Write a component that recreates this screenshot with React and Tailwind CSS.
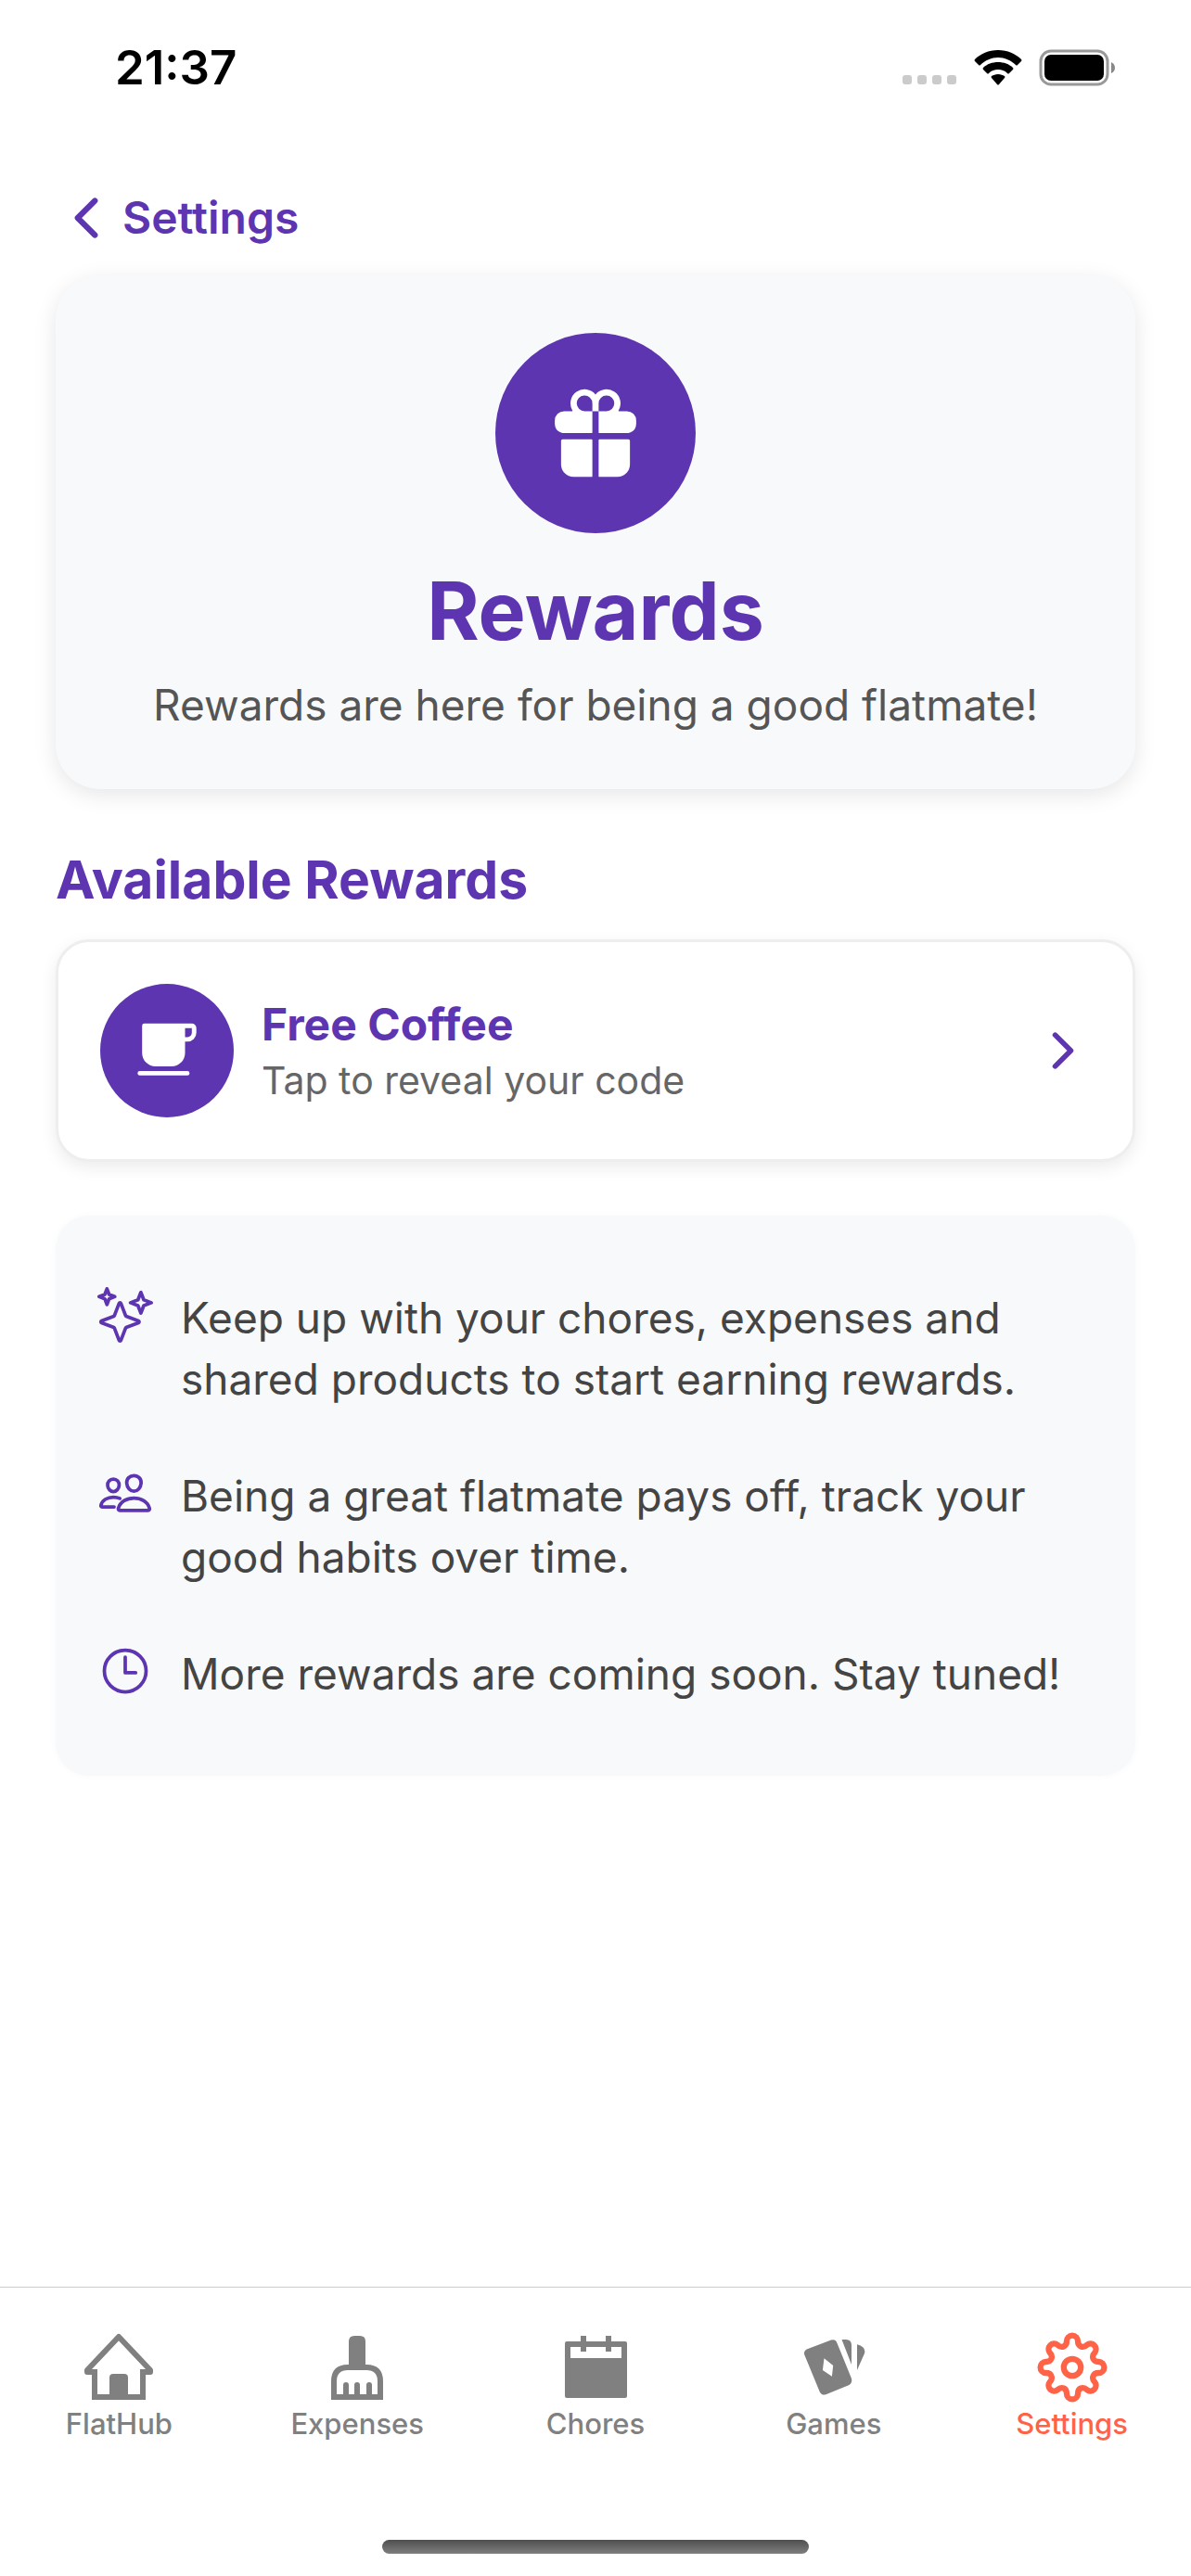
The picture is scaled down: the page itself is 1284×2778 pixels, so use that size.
import React from 'react';
import {
  IoCafe,
  IoChevronBack,
  IoChevronForward,
  IoGift,
  IoPeopleOutline,
  IoSparklesOutline,
  IoTimeOutline,
} from 'react-icons/io5';

const tips = [
  { icon: IoSparklesOutline, text: 'Keep up with your chores, expenses and shared products to start earning rewards.' },
  { icon: IoPeopleOutline, text: 'Being a great flatmate pays off, track your good habits over time.' },
  { icon: IoTimeOutline, text: 'More rewards are coming soon. Stay tuned!' },
];

const HouseIcon = () => (
  <svg width="80" height="80" viewBox="0 0 80 80" fill="none" stroke="currentColor" strokeWidth="6">
    <path d="M14 45 H6 V43 L40 7 L74 43 V45 H66" strokeLinejoin="round" />
    <path d="M14 42 V72 H66 V42" />
    <path d="M30 74 V51 Q30 47 34 47 H46 Q50 47 50 51 V74 Z" fill="currentColor" stroke="none" />
  </svg>
);

const BrushIcon = () => (
  <svg width="80" height="80" viewBox="0 0 80 80" fill="none" stroke="currentColor" strokeWidth="6">
    <path d="M15 72 V55 Q15 40 30 40 H50 Q65 40 65 55 V72 Z" />
    <path d="M31 40 V12 Q31 6 37 6 H43 Q49 6 49 12 V40 Z" fill="currentColor" stroke="none" />
    <path d="M28 72 V59 M40 72 V59 M53 72 V59" strokeLinecap="round" />
  </svg>
);

const CalendarIcon = () => (
  <svg width="80" height="80" viewBox="0 0 80 80" fill="currentColor">
    <path fillRule="evenodd" d="M9 12 H72 Q74 12 74 14 V71 Q74 73 72 73 H9 Q7 73 7 71 V14 Q7 12 9 12 Z M13 18 V30 H68 V18 Z" />
    <path d="M24 6 H30 V23 H24 Z M51 6 H57 V23 H51 Z" />
  </svg>
);

const CardsIcon = () => (
  <svg width="80" height="80" viewBox="0 0 80 80" fill="currentColor">
    <path fillRule="evenodd" d="M12 20 L37 10.6 Q41.500 9 43.300 13.400 L58.800 51.500 Q60.500 56.500 56.500 59 L32 69 Q27 71 24.800 66.500 L8.300 26.500 Q6.800 22 12 20 Z M29.500 30.300 L27.900 43 L37.900 49.700 L39.200 38 Z" />
    <path d="M48.500 10 H53 Q59 10 59 16 V37 Z M65 15.300 Q75 18 73 25 L65 43 Z" />
  </svg>
);

const GearIcon = () => (
  <svg width="80" height="80" viewBox="-40 -40 80 80" fill="none" stroke="currentColor" strokeWidth="6.300">
    <path
      strokeLinejoin="round"
      d="M-6 -28.400 A6 6 0 0 1 6 -28.400 C6 -22.400 11.700 -20.100 15.900 -24.300
         A6 6 0 0 1 24.300 -15.900 C20.100 -11.700 22.400 -6 28.400 -6
         A6 6 0 0 1 28.400 6 C22.400 6 20.100 11.700 24.300 15.900
         A6 6 0 0 1 15.900 24.300 C11.700 20.100 6 22.400 6 28.400
         A6 6 0 0 1 -6 28.400 C-6 22.400 -11.700 20.100 -15.900 24.300
         A6 6 0 0 1 -24.300 15.900 C-20.100 11.700 -22.400 6 -28.400 6
         A6 6 0 0 1 -28.400 -6 C-22.400 -6 -20.100 -11.700 -24.300 -15.900
         A6 6 0 0 1 -15.900 -24.300 C-11.700 -20.100 -6 -22.400 -6 -28.400 Z"
    />
    <circle r="9.200" />
  </svg>
);

const tabs = [
  { label: 'FlatHub', icon: HouseIcon },
  { label: 'Expenses', icon: BrushIcon },
  { label: 'Chores', icon: CalendarIcon },
  { label: 'Games', icon: CardsIcon },
  { label: 'Settings', icon: GearIcon, active: true },
];

const StatusBar = () => (
  <div className="flex h-[145px] items-center justify-between pr-20 pl-[124px]">
    <span className="text-[51px] leading-none font-semibold text-black">21:37</span>
    <div className="flex items-center gap-[17px]">
      <svg width="62" height="40" viewBox="0 0 62 40" fill="#cbcbcb">
        <rect x="3" y="28" width="10" height="10" rx="3" />
        <rect x="19" y="28" width="10" height="10" rx="3" />
        <rect x="35" y="28" width="10" height="10" rx="3" />
        <rect x="51" y="28" width="10" height="10" rx="3" />
      </svg>
      <svg width="54" height="40" viewBox="0 0 54 40" fill="#000">
        <path d="M27 1 C37 1 46 5 52 11 Q53 12 52 13 L48 17 Q47 18 46 17 C41 12 34 9 27 9 C20 9 13 12 8 17 Q7 18 6 17 L2 13 Q1 12 2 11 C8 5 17 1 27 1 Z" />
        <path d="M27 14 C33 14 39 16 43 20 Q44 21 43 22 L39 26 Q38 27 37 26 C34 23 31 22 27 22 C23 22 20 23 17 26 Q16 27 15 26 L11 22 Q10 21 11 20 C15 16 21 14 27 14 Z" />
        <path d="M27 27 C30 27 32 28 34 29 Q35 30 34 31 L28 38 Q27 39 26 38 L20 31 Q19 30 20 29 C22 28 24 27 27 27 Z" />
      </svg>
      <svg width="84" height="40" viewBox="0 0 84 40">
        <rect x="2" y="2" width="72" height="36" rx="11" fill="none" stroke="#999" strokeWidth="3" />
        <rect x="6" y="6" width="64" height="28" rx="7" fill="#000" />
        <path d="M78 14 Q82 16 82 20 Q82 24 78 26 Z" fill="#888" />
      </svg>
    </div>
  </div>
);

const TabBar = () => (
  <nav className="border-t border-[#ccc] bg-white pt-[46px] pb-6">
    <div className="flex">
      {tabs.map(({ label, icon: Icon, active }) => (
        <a
          key={label}
          href={`#${label.toLowerCase()}`}
          className={`flex flex-1 flex-col items-center ${active ? 'text-[#ff6347]' : 'text-[#808080]'}`}
        >
          <Icon />
          <span className="text-[31px] leading-[42px] font-medium">{label}</span>
        </a>
      ))}
    </div>
    <div className="mx-auto mt-[104px] h-[15px] w-[460px] rounded-full bg-linear-to-b from-[#4f4f4f] to-[#7f7f7f]" />
  </nav>
);

const App = () => {
  return (
    <div className="flex min-h-screen flex-col bg-white font-['Inter',sans-serif] text-[#5e35b1]">
      <StatusBar />

      <main className="flex flex-1 flex-col px-[60px] pt-[57px]">
        <button className="flex items-center gap-1.5 self-start text-[48px] leading-[66px] font-semibold">
          <IoChevronBack size={66} />
          Settings
        </button>

        <section className="mt-[29px] flex flex-col items-center rounded-[48px] bg-[#f8f9fb] px-12 py-[62px] shadow-[0_6px_24px_rgba(0,0,0,0.1)]">
          <div className="flex size-[216px] items-center justify-center rounded-full bg-[#5e35b1] text-white">
            <IoGift size={108} />
          </div>
          <h1 className="mt-8 text-[86px] leading-[104px] font-bold">Rewards</h1>
          <p className="mt-5 text-[46px] leading-[58px] text-[#555]">Rewards are here for being a good flatmate!</p>
        </section>

        <h2 className="mt-[62px] text-[57px] leading-[72px] font-bold">Available Rewards</h2>

        <button className="mt-7 flex items-center gap-[30px] rounded-[36px] border-[3px] border-[#eee] bg-white p-[45px] text-left shadow-[0_6px_18px_rgba(0,0,0,0.08)]">
          <span className="flex size-36 items-center justify-center rounded-full bg-[#5e35b1] text-white">
            <IoCafe size={78} />
          </span>
          <span className="flex flex-1 flex-col pt-1">
            <span className="text-[48px] leading-[60px] font-bold">Free Coffee</span>
            <span className="text-[41px] leading-[60px] text-[#666]">Tap to reveal your code</span>
          </span>
          <IoChevronForward size={60} />
        </button>

        <ul className="mt-[58px] flex flex-col gap-[60px] rounded-[36px] bg-[#f8f9fb] px-[45px] py-[77px] shadow-[0_0_8px_rgba(248,249,251,1)]">
          {tips.map(({ icon: Icon, text }) => (
            <li key={text} className="flex items-start gap-[30px]">
              <Icon size={60} className="shrink-0" />
              <p className="text-[46px] leading-[66px] text-[#444]">{text}</p>
            </li>
          ))}
        </ul>
      </main>

      <TabBar />
    </div>
  );
};

export default App;
